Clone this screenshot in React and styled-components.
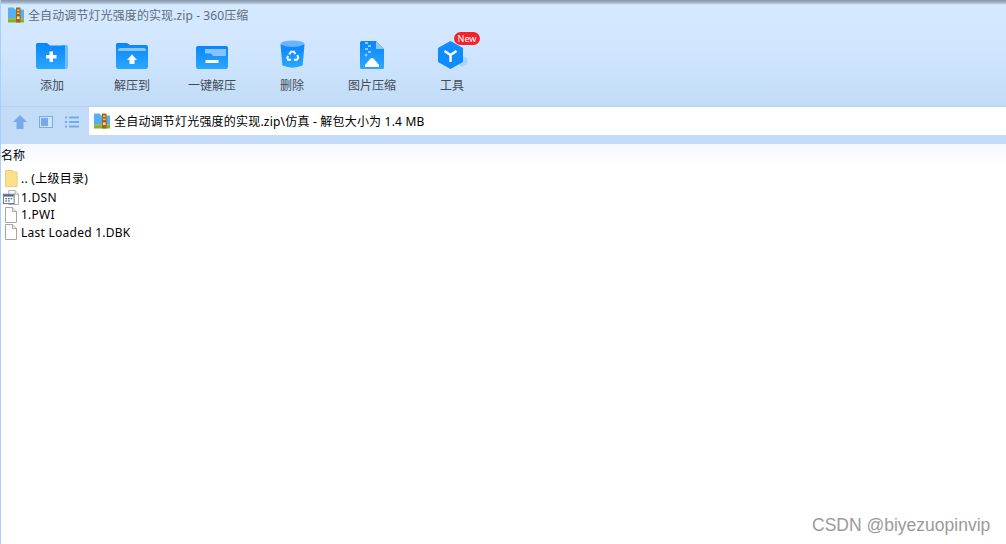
import { createGlobalStyle, styled } from 'styled-components'

const GlobalStyle = createGlobalStyle`
  html, body {
    margin: 0;
    height: 100%;
    background: #fff;
    overflow: hidden;
  }
  #root {
    height: 100%;
  }
`

const ArchiveIcon = ({ size = 16 }) => (
  <svg width={size} height={size} viewBox="0 0 16 16">
    <path d="M0 1.5 Q0 0.5 1 0.5 H5.5 L7 2.5 H15 Q16 2.5 16 3.5 V13 H0 Z" fill="#55b0f2" />
    <rect x="0" y="12" width="16" height="3.5" fill="#7cb82f" />
    <rect x="0" y="11.5" width="16" height="1" fill="#f4a21c" />
    <rect x="8" y="0.5" width="4.5" height="15" fill="#a5651c" />
    <rect x="9" y="2.5" width="2.5" height="1.5" fill="#f2c14e" />
    <rect x="9" y="5.5" width="2.5" height="1.5" fill="#f2c14e" />
    <rect x="8.5" y="9" width="3.5" height="3.5" fill="#f6d77a" stroke="#8a5314" strokeWidth="0.6" />
  </svg>
)

const FolderShape = ({ children, id }) => (
  <svg width="32" height="27" viewBox="0 0 32 27">
    <defs>
      <linearGradient id={id} x1="0" y1="0" x2="0" y2="1">
        <stop offset="0" stopColor="#0a84ff" />
        <stop offset="1" stopColor="#2aa8ff" />
      </linearGradient>
    </defs>
    {children(`url(#${id})`)}
  </svg>
)

const AddIcon = () => (
  <FolderShape id="add">
    {(fill) => (
      <>
        <path d="M26 3 H30 Q32 3 32 5 V25 Q32 27 30 27 H26 Z" fill="#72bcff" />
        <path d="M1.5 1 H11 L14 3.5 H29 V27 H2 Q0 27 0 25 V2.5 Q0 1 1.5 1 Z" fill={fill} />
        <path d="M13.5 9.5 H17 V13 H20.5 V16.5 H17 V20 H13.5 V16.5 H10 V13 H13.5 Z" fill="#fff" />
      </>
    )}
  </FolderShape>
)

const ExtractIcon = () => (
  <FolderShape id="extract">
    {(fill) => (
      <>
        <path d="M1.5 1 H11 L14 3 H30 Q32 3 32 5 V25 Q32 27 30 27 H2 Q0 27 0 25 V2.5 Q0 1 1.5 1 Z" fill={fill} />
        <path d="M2 8 Q2 6 4 6 H28 Q30 6 30 8 V9 H2 Z" fill="#85c4ff" />
        <path d="M16 12.5 L21 18 H18.5 V22 H13.5 V18 H11 Z" fill="#fff" />
      </>
    )}
  </FolderShape>
)

const OneKeyIcon = () => (
  <FolderShape id="onekey">
    {(fill) => (
      <>
        <path d="M2 4 H30 Q32 4 32 6 V25 Q32 27 30 27 H2 Q0 27 0 25 V6 Q0 4 2 4 Z" fill={fill} />
        <path d="M9 7 H30 V14 H17 L15 11.5 H9 Z" fill="#85c4ff" />
        <rect x="9.5" y="18" width="13" height="3" rx="0.5" fill="#fff" />
      </>
    )}
  </FolderShape>
)

const TrashIcon = () => (
  <svg width="25" height="29" viewBox="0 0 26 30">
    <defs>
      <linearGradient id="trash" x1="0" y1="0" x2="0" y2="1">
        <stop offset="0" stopColor="#0a84ff" />
        <stop offset="1" stopColor="#2aa8ff" />
      </linearGradient>
    </defs>
    <ellipse cx="13" cy="4" rx="12.5" ry="3.5" fill="#68b4ff" />
    <path d="M0.5 4.5 Q13 10 25.5 4.5 L23.5 26.5 Q13 31 2.5 26.5 Z" fill="url(#trash)" />
    <g fill="none" stroke="#fff" strokeWidth="2">
      <path d="M9.5 15 L11.5 12 H14.5 L16 14.5" />
      <path d="M18 15.5 L19 18.5 L17.5 20.5 H14.5" />
      <path d="M11.5 20.5 H8.5 L7.5 18.5 L8.5 16.5" />
    </g>
  </svg>
)

const ImageZipIcon = () => (
  <svg width="24" height="28" viewBox="0 0 24 28">
    <defs>
      <linearGradient id="zip" x1="0" y1="0" x2="0" y2="1">
        <stop offset="0" stopColor="#0a84ff" />
        <stop offset="1" stopColor="#2aa8ff" />
      </linearGradient>
    </defs>
    <path d="M1.5 0 H16 L24 8 V26.5 Q24 28 22.5 28 H1.5 Q0 28 0 26.5 V1.5 Q0 0 1.5 0 Z" fill="url(#zip)" />
    <path d="M16 0 L24 8 H16 Z" fill="#8cc8ff" />
    <g fill="#8cc8ff">
      <rect x="5" y="1" width="3" height="2" />
      <rect x="8" y="4" width="3" height="2" />
      <rect x="5" y="7" width="3" height="2" />
      <rect x="8" y="10" width="3" height="2" />
      <circle cx="6" cy="14" r="1.5" />
    </g>
    <path d="M5 26 V24 L10 18 Q12 16 14 18 L19 24 V26 Z" fill="#fff" />
  </svg>
)

const ToolIcon = () => (
  <svg width="32" height="28" viewBox="-2 0 32 28">
    <path d="M24 14.5 L29.5 17.5 V23 L24 26 L19 23 V17.5 Z" fill="#a9d4fb" />
    <path d="M12.5 0 L25 7 V21 L12.5 28 L0 21 V7 Z" fill="#0f8cff" />
    <path d="M12.5 14 V21 M12.5 14 L6.5 10 M12.5 14 L18.5 10" stroke="#fff" strokeWidth="2.4" fill="none" />
  </svg>
)

const UpIcon = () => (
  <svg width="14" height="14" viewBox="0 0 14 14">
    <path d="M7 0 L14 7 H10.5 V14 H3.5 V7 H0 Z" fill="#79a9ea" />
  </svg>
)

const PreviewIcon = () => (
  <svg width="14" height="12" viewBox="0 0 14 12">
    <rect x="0.5" y="0.5" width="13" height="11" fill="#cfe3fa" stroke="#79a9ea" />
    <rect x="2" y="2" width="7" height="8" fill="#79a9ea" />
  </svg>
)

const ListIcon = () => (
  <svg width="14" height="12" viewBox="0 0 14 12">
    <g fill="#79a9ea">
      <rect x="0" y="0.5" width="2" height="2" />
      <rect x="4" y="0.5" width="10" height="2" />
      <rect x="0" y="5" width="2" height="2" />
      <rect x="4" y="5" width="10" height="2" />
      <rect x="0" y="9.5" width="2" height="2" />
      <rect x="4" y="9.5" width="10" height="2" />
    </g>
  </svg>
)

const FolderRowIcon = () => (
  <svg width="13" height="17" viewBox="0 0 14 17" preserveAspectRatio="none">
    <path d="M0.5 1 Q0.5 0.5 1 0.5 H8 L9 2 H12.5 Q13 2 13 2.5 V16.5 H0.5 Z" fill="#fde08c" stroke="#eec96e" />
  </svg>
)

const FileIcon = () => (
  <svg width="12" height="16" viewBox="0 0 12 16">
    <path d="M0.5 0.5 H7.5 L11.5 4.5 V15.5 H0.5 Z" fill="#fff" stroke="#a6a6a6" />
    <path d="M7.5 0.5 V4.5 H11.5" fill="#eee" stroke="#a6a6a6" />
  </svg>
)

const DsnIcon = () => (
  <svg width="16" height="15" viewBox="0 0 18 16" preserveAspectRatio="none">
    <path d="M6.5 0.5 H13.5 L17.5 4.5 V15.5 H6.5 Z" fill="#fff" stroke="#a6a6a6" />
    <path d="M13.5 0.5 V4.5 H17.5" fill="#eee" stroke="#a6a6a6" />
    <rect x="0.5" y="4.5" width="12" height="10" fill="#fff" stroke="#5c6b80" />
    <rect x="1" y="5" width="11" height="2" fill="#46688f" />
    <g fill="#6a7a8e">
      <rect x="2.5" y="8.5" width="2" height="1.5" />
      <rect x="5.5" y="8.5" width="2" height="1.5" />
      <rect x="8.5" y="8.5" width="2" height="1.5" />
      <rect x="2.5" y="11" width="2" height="1.5" />
      <rect x="5.5" y="11" width="2" height="1.5" />
    </g>
  </svg>
)

const tools = [
  { label: '添加', icon: <AddIcon /> },
  { label: '解压到', icon: <ExtractIcon /> },
  { label: '一键解压', icon: <OneKeyIcon /> },
  { label: '删除', icon: <TrashIcon /> },
  { label: '图片压缩', icon: <ImageZipIcon /> },
  { label: '工具', icon: <ToolIcon />, badge: 'New' },
]

const files = [
  { name: '.. (上级目录)', icon: <FolderRowIcon />, height: 20 },
  { name: '1.DSN', icon: <DsnIcon />, height: 18 },
  { name: '1.PWI', icon: <FileIcon />, height: 17 },
  { name: 'Last Loaded 1.DBK', icon: <FileIcon />, height: 18 },
]

export default function App() {
  return (
    <>
      <GlobalStyle />
      <Window>
        <Header>
          <TitleBar>
            <ArchiveIcon />
            <span>全自动调节灯光强度的实现.zip - 360压缩</span>
          </TitleBar>
          <Toolbar>
            {tools.map((tool) => (
              <ToolButton key={tool.label}>
                <ToolIconBox>
                  {tool.icon}
                  {tool.badge && <Badge>{tool.badge}</Badge>}
                </ToolIconBox>
                <ToolLabel>{tool.label}</ToolLabel>
              </ToolButton>
            ))}
          </Toolbar>
          <NavRow>
            <NavIcons>
              <UpIcon />
              <PreviewIcon />
              <ListIcon />
            </NavIcons>
            <AddressBar>
              <ArchiveIcon />
              <span>全自动调节灯光强度的实现.zip\仿真 - 解包大小为 1.4 MB</span>
            </AddressBar>
          </NavRow>
        </Header>
        <ColumnHeader>名称</ColumnHeader>
        <FileList>
          {files.map((file) => (
            <FileRow key={file.name} $height={file.height}>
              <FileIconBox>{file.icon}</FileIconBox>
              <span>{file.name}</span>
            </FileRow>
          ))}
        </FileList>
        <Watermark>CSDN @biyezuopinvip</Watermark>
      </Window>
    </>
  )
}

const Window = styled.div`
  position: relative;
  height: 100%;
  border-left: 1px solid #a9d0f8;
  box-sizing: border-box;
  font-family: 'Noto Sans', 'Noto Sans CJK SC', sans-serif;
  font-size: 12px;
  color: #000;
  overflow: hidden;
`

const Header = styled.div`
  height: 144px;
  margin-left: -1px;
  box-sizing: border-box;
  background: linear-gradient(#8797a8 0, #9aabbd 2px, #d5e9ff 5px, #d2e7ff 40px, #c2dcf7 106px, #c2dcf7 144px);
`

const TitleBar = styled.div`
  height: 28px;
  padding: 2px 0 0 8px;
  display: flex;
  align-items: center;
  gap: 4px;
  color: #5f6d7c;
  font-size: 12px;
  letter-spacing: 0.1px;
  box-sizing: border-box;
`

const Toolbar = styled.div`
  height: 78px;
  padding: 11px 0 0 12px;
  display: flex;
  box-sizing: border-box;
`

const ToolButton = styled.div`
  width: 80px;
  display: flex;
  flex-direction: column;
  align-items: center;
`

const ToolIconBox = styled.div`
  position: relative;
  height: 30px;
  display: flex;
  align-items: flex-end;
  justify-content: center;
`

const Badge = styled.div`
  position: absolute;
  top: -7px;
  left: 18px;
  width: 26px;
  height: 13px;
  border-radius: 7px;
  background: #f5222d;
  color: #fff;
  font-size: 9px;
  line-height: 13px;
  text-align: center;
`

const ToolLabel = styled.div`
  margin-top: 8px;
  color: #444c55;
  font-size: 12px;
  line-height: 18px;
`

const NavRow = styled.div`
  height: 29px;
  display: flex;
  border-top: 1px solid #b9d3ee;
`

const NavIcons = styled.div`
  width: 89px;
  padding-left: 13px;
  display: flex;
  align-items: center;
  gap: 12px;
  box-sizing: border-box;
`

const AddressBar = styled.div`
  flex: 1;
  height: 28px;
  padding-left: 5px;
  display: flex;
  align-items: center;
  gap: 4px;
  background: #fff;
  letter-spacing: 0.2px;
  box-sizing: border-box;
`

const ColumnHeader = styled.div`
  height: 24px;
  line-height: 24px;
  background: linear-gradient(#f3f8ff, #fff);
`

const FileList = styled.div`
  display: flex;
  flex-direction: column;
`

const FileRow = styled.div`
  height: ${(props) => props.$height}px;
  display: flex;
  align-items: center;
  letter-spacing: 0.25px;
`

const FileIconBox = styled.div`
  width: 20px;
  display: flex;
  justify-content: center;
`

const Watermark = styled.div`
  position: absolute;
  left: 811px;
  top: 515px;
  color: #9a9a9a;
  font-family: 'Liberation Sans', sans-serif;
  font-size: 17.5px;
  line-height: 20px;
`
